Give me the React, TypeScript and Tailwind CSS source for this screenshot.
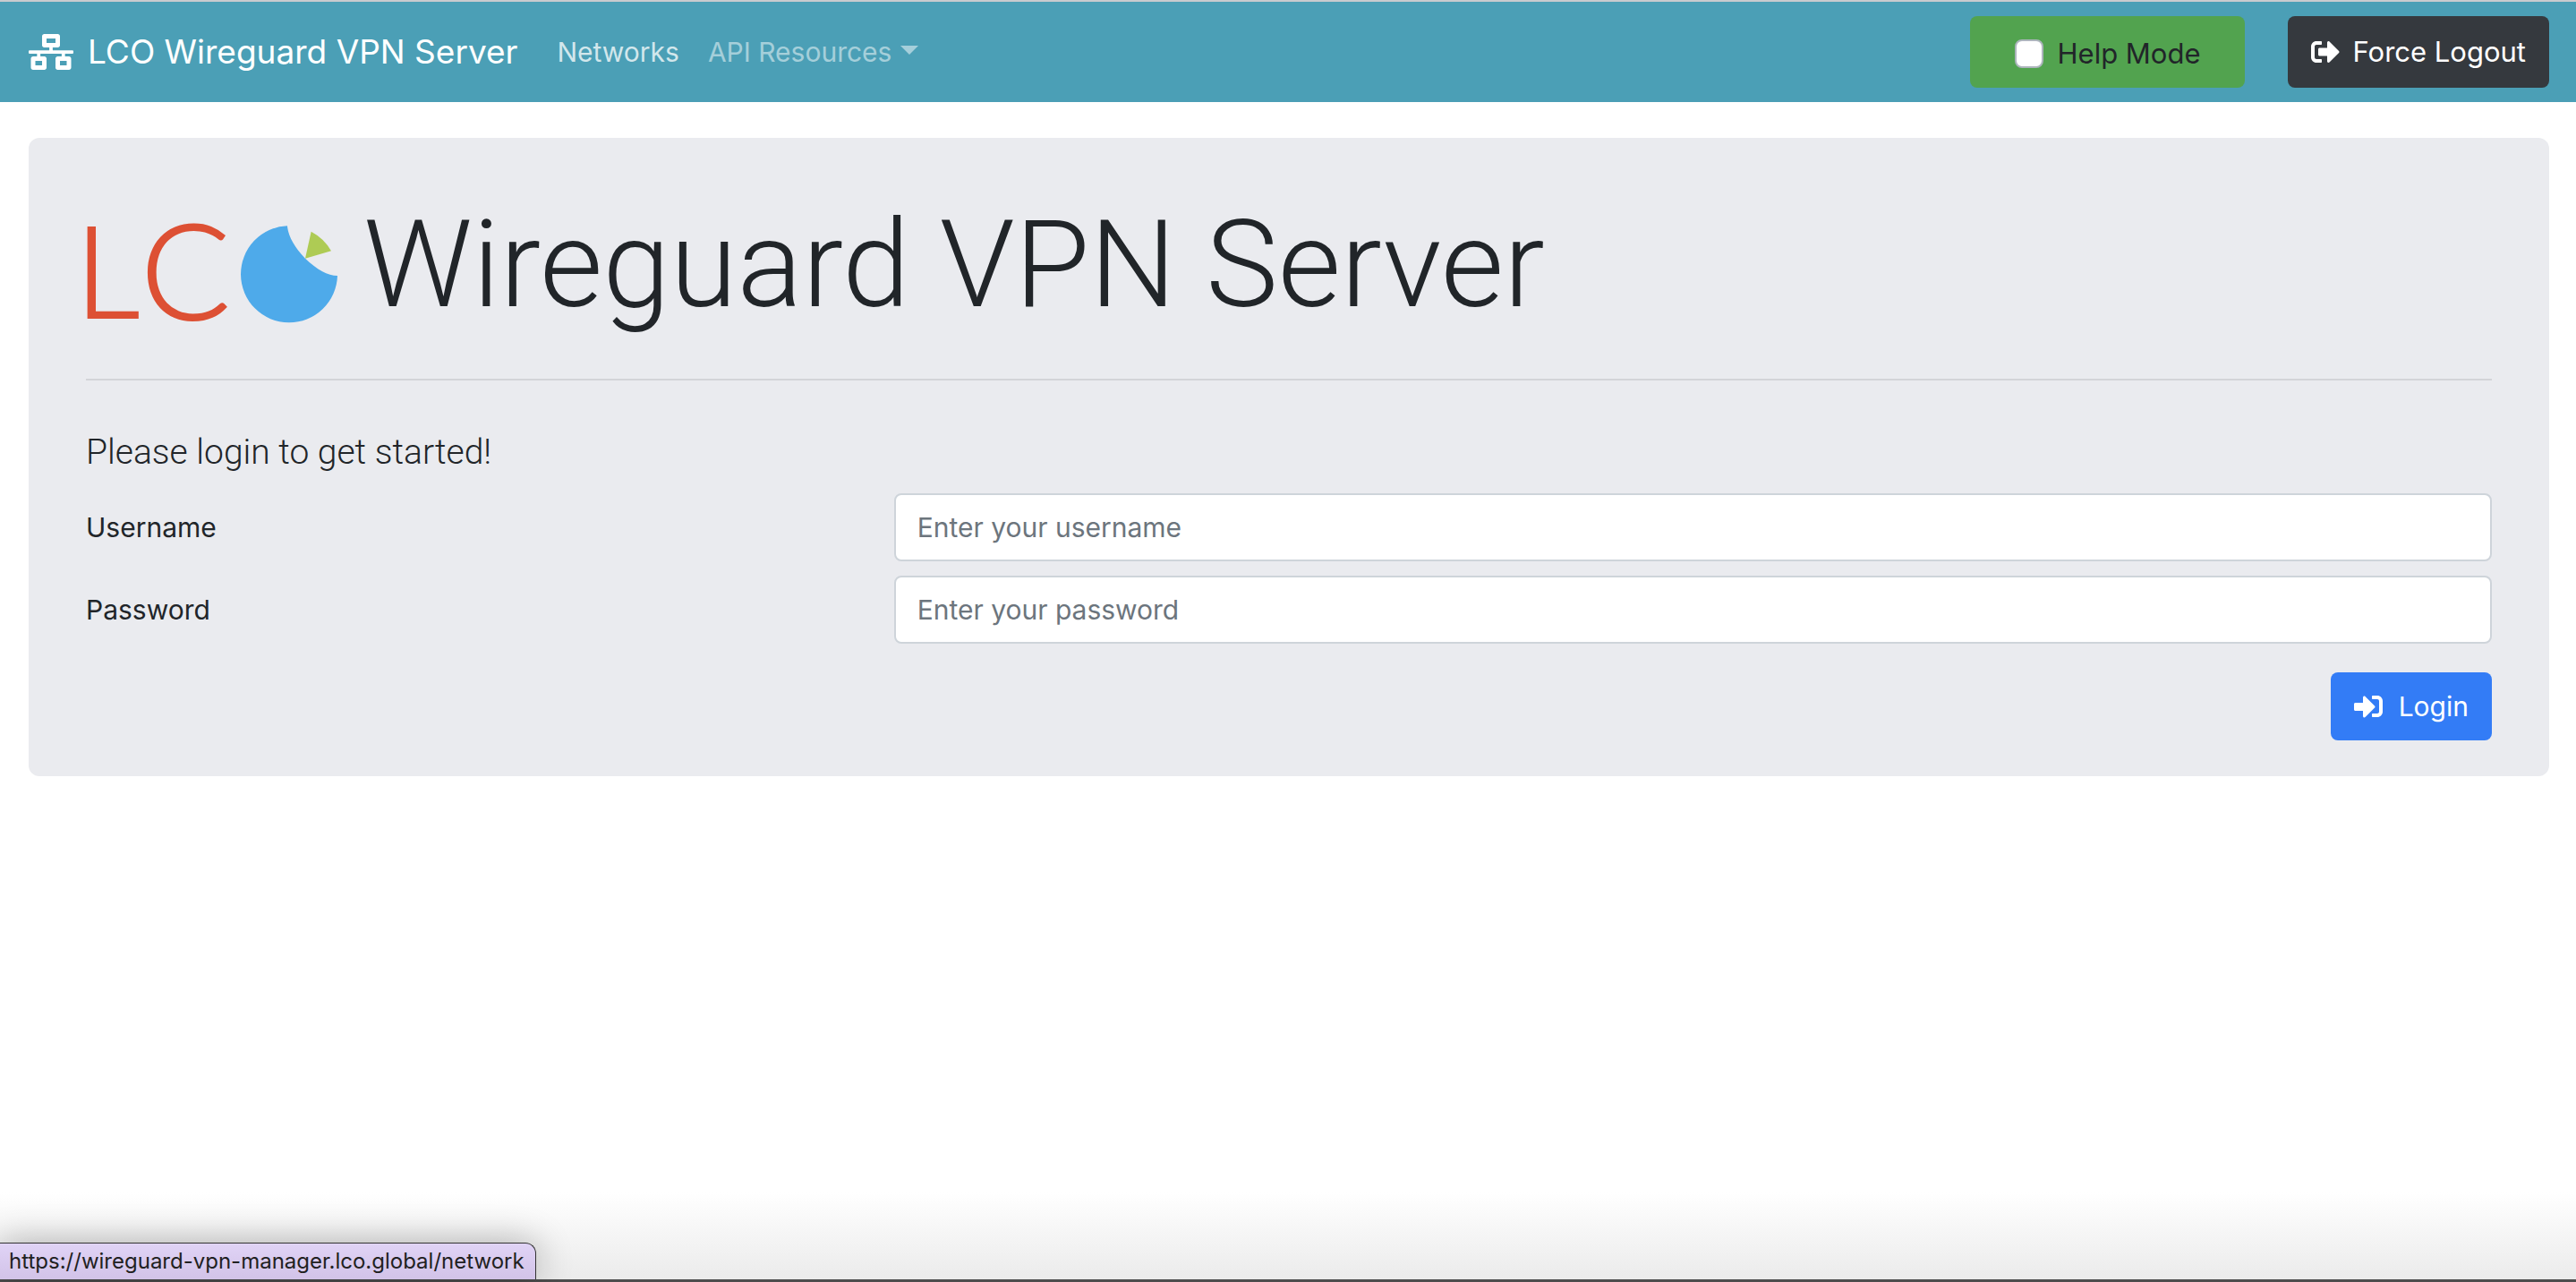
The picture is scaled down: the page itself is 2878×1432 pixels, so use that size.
import { useState } from "react";
import { FaNetworkWired, FaSignInAlt, FaSignOutAlt } from "react-icons/fa";

function LcoLogo() {
  return (
    <svg
      viewBox="108 144 846 348"
      className="mt-[30px] h-[116px] w-[282px] shrink-0 overflow-visible"
      role="img"
      aria-label="LCO"
    >
      <g
        fill="#dd5034"
        stroke="#dd5034"
        strokeWidth="6"
        fontFamily="Lato"
        fontWeight="300"
      >
        <text x="71" y="466" fontSize="428">
          L
        </text>
        <text x="292" y="470" fontSize="444">
          C
        </text>
      </g>
      <path
        d="M783 157 C785 190 808 230 843 266 C880 302 920 324 951 324 A162 162 0 1 1 783 157 Z"
        fill="#4eaaea"
      />
      <path d="M863 176 Q908 200 930 241 L843 266 Z" fill="#aecb54" />
    </svg>
  );
}

function Navbar() {
  const [help, setHelp] = useState(false);
  return (
    <header className="flex items-center border-t-2 border-[#c9cbce] bg-[#4b9fb6] py-4 pr-[30px] pl-8 text-[30px] leading-[48px]">
      <a href="#home" className="flex items-center gap-4 text-[37px] text-white">
        <FaNetworkWired className="h-10 w-[50px]" />
        LCO Wireguard VPN Server
      </a>
      <nav className="ml-11 flex items-center gap-8">
        <a href="#networks" className="text-white/75">
          Networks
        </a>
        <button type="button" className="flex items-center gap-[10px] text-white/50">
          API Resources
          <svg viewBox="0 0 20 10" className="mb-1 h-[10px] w-5" fill="currentColor">
            <path d="M0 0H20L10 10Z" />
          </svg>
        </button>
      </nav>
      <div className="ml-auto flex items-center gap-12 text-[31px]">
        <label className="flex h-20 items-center gap-4 rounded-lg bg-[#52a34f] px-[50px] pt-1 text-[#212529]">
          <input
            type="checkbox"
            checked={help}
            onChange={(e) => setHelp(e.target.checked)}
            className="size-8 appearance-none rounded-lg border-2 border-[#adb5bd] bg-white checked:bg-[#337cf6]"
          />
          Help Mode
        </label>
        <button
          type="button"
          className="flex h-20 items-center gap-[14px] rounded-lg bg-[#35393e] px-[26px] text-white"
        >
          <FaSignOutAlt className="size-8" />
          Force Logout
        </button>
      </div>
    </header>
  );
}

type FieldProps = { id: string; label: string; type: string; placeholder: string };

function Field({ id, label, type, placeholder }: FieldProps) {
  return (
    <div className="grid grid-cols-3 items-center gap-5">
      <label htmlFor={id}>{label}</label>
      <input
        id={id}
        type={type}
        placeholder={placeholder}
        className="col-span-2 h-[76px] w-full rounded-lg border-2 border-[#ced4da] bg-white px-6 placeholder:text-[#6c757d]"
      />
    </div>
  );
}

export default function App() {
  return (
    <div className="flex min-h-screen flex-col bg-white font-['Inter',sans-serif] text-[#212529]">
      <Navbar />
      <main className="mt-10 mr-[30px] ml-8 rounded-xl bg-[#eaebef] px-16 pt-16 pb-10 text-[30px]">
        <h1 className="flex items-start gap-7 font-['Roboto',sans-serif] text-[136px] leading-[155px] font-light">
          <LcoLogo />
          Wireguard VPN Server
        </h1>
        <hr className="mt-[50px] border-t-2 border-[#d3d4d8]" />
        <form onSubmit={(e) => e.preventDefault()}>
          <p className="mt-[50px] mb-4 font-['Roboto',sans-serif] text-[39px] leading-[60px] font-light">
            Please login to get started!
          </p>
          <div className="flex flex-col gap-4">
            <Field id="username" label="Username" type="text" placeholder="Enter your username" />
            <Field id="password" label="Password" type="password" placeholder="Enter your password" />
          </div>
          <div className="mt-8 flex justify-end">
            <button
              type="submit"
              className="flex h-[76px] items-center gap-[18px] rounded-lg bg-[#337cf6] px-[26px] text-white"
            >
              <FaSignInAlt className="size-8" />
              Login
            </button>
          </div>
        </form>
      </main>
      <footer className="mt-auto border-b-[3px] border-[#4d4d4d] bg-linear-to-t from-[#ebebeb] to-white pt-14">
        <div className="w-fit rounded-tr-xl border-t border-r border-[#333333] bg-linear-to-t from-[#d2c3e8] to-[#e0d3f6] pr-3 pl-[10px] text-2xl leading-10 text-[#212121] shadow-[0_0_40px_rgba(0,0,0,0.3)]">
          https://wireguard-vpn-manager.lco.global/network
        </div>
      </footer>
    </div>
  );
}
